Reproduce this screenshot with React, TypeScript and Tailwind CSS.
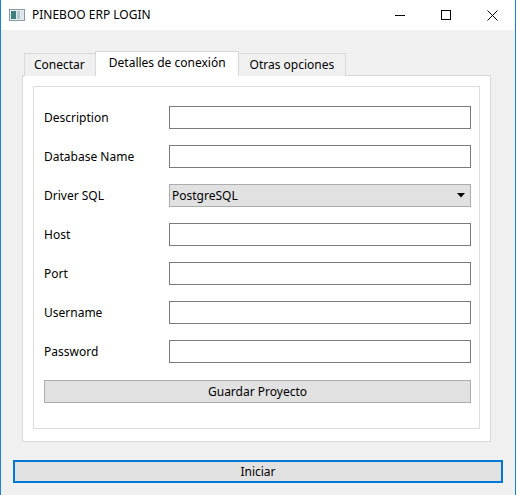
import React from "react";

const fields = [
  { label: "Description", kind: "text" },
  { label: "Database Name", kind: "text" },
  { label: "Driver SQL", kind: "combo" },
  { label: "Host", kind: "text" },
  { label: "Port", kind: "text" },
  { label: "Username", kind: "text" },
  { label: "Password", kind: "text" },
];

const tabs = ["Conectar", "Detalles de conexión", "Otras opciones"];

const AppIcon = () => (
  <svg width="16" height="12" viewBox="0 0 16 12">
    <rect x="0.5" y="0.5" width="15" height="11" fill="#e8ecef" stroke="#8a9aa5" />
    <rect x="2" y="2" width="5" height="8" fill="#3f7f7a" />
    <rect x="8" y="2" width="3" height="8" fill="#b6c7cf" />
    <rect x="12" y="2" width="2" height="8" fill="#dbe4e8" />
  </svg>
);

const TitleBar = () => (
  <div className="flex h-[30px] items-center bg-white">
    <div className="ml-[8px] mr-[7px] flex items-center">
      <AppIcon />
    </div>
    <span className="text-[12px] text-black">PINEBOO ERP LOGIN</span>
    <div className="ml-auto flex h-full">
      <div className="flex w-[46px] items-center justify-center">
        <svg width="10" height="10" viewBox="0 0 10 10">
          <line x1="0" y1="5.5" x2="10" y2="5.5" stroke="#000" strokeWidth="1" />
        </svg>
      </div>
      <div className="flex w-[46px] items-center justify-center">
        <svg width="10" height="10" viewBox="0 0 10 10">
          <rect x="0.5" y="0.5" width="9" height="9" fill="none" stroke="#000" strokeWidth="1" />
        </svg>
      </div>
      <div className="flex w-[46px] items-center justify-center">
        <svg width="11" height="11" viewBox="0 0 11 11">
          <path d="M0.5 0.5 L10.5 10.5 M10.5 0.5 L0.5 10.5" stroke="#000" strokeWidth="1" />
        </svg>
      </div>
    </div>
  </div>
);

const TabBar = () => (
  <div className="flex h-[25px] items-end pl-[2px]">
    {tabs.map((t, i) =>
      i === 1 ? (
        <div
          key={t}
          className="relative z-10 -mx-[1px] flex h-[25px] items-start border border-b-0 border-[#d9d9d9] bg-white pl-[13px] pr-[12px] pt-[2px]"
        >
          {t}
        </div>
      ) : (
        <div
          key={t}
          className={
            "flex h-[23px] items-center border border-b-0 border-[#d9d9d9] bg-[#f0f0f0] pb-[1px] " +
            (i === 0 ? "pl-[9px] pr-[10px]" : "pl-[11px] pr-[11px]")
          }
        >
          {t}
        </div>
      )
    )}
  </div>
);

const Field = ({ label, kind }: { label: string; kind: string }) => (
  <div className="flex h-[23px] items-center">
    <span className="w-[125px] shrink-0">{label}</span>
    {kind === "combo" ? (
      <div className="flex h-[23px] flex-1 items-center border border-[#adadad] bg-[#e1e1e1] pl-[2px] pr-[5px]">
        <span>PostgreSQL</span>
        <svg className="ml-auto" width="8" height="5" viewBox="0 0 8 5">
          <path d="M0 0 H8 L4 4.5 Z" fill="#000" />
        </svg>
      </div>
    ) : (
      <div className="h-[23px] flex-1 border border-[#7a7a7a] bg-white" />
    )}
  </div>
);

export default function App() {
  return (
    <div
      className="flex h-[495px] w-[516px] flex-col border-x border-[#1883d7] bg-[#f0f0f0] text-[12px] text-black"
      style={{ fontFamily: '"Noto Sans", "Liberation Sans", sans-serif' }}
    >
      <TitleBar />
      <div className="flex flex-col px-[11px] pt-[21px]">
        <div className="pl-[10px] pr-[13px]">
          <TabBar />
          <div className="-mt-[1px] h-[367px] border border-[#d9d9d9] bg-white px-[10px] pt-[10px]">
            <div className="flex h-[343px] flex-col border border-[#dcdcdc] pl-[10px] pr-[8px] pt-[19px]">
              <div className="flex flex-col gap-[16px]">
                {fields.map((f) => (
                  <Field key={f.label} label={f.label} kind={f.kind} />
                ))}
              </div>
              <button className="mt-[17px] flex h-[23px] items-center justify-center border border-[#adadad] bg-[#e1e1e1]">
                Guardar Proyecto
              </button>
            </div>
          </div>
        </div>
        <button className="mt-[18px] ml-[1px] mr-[1px] flex h-[23px] items-center justify-center border-2 border-[#0078d7] bg-[#e1e1e1]">
          Iniciar
        </button>
      </div>
    </div>
  );
}
